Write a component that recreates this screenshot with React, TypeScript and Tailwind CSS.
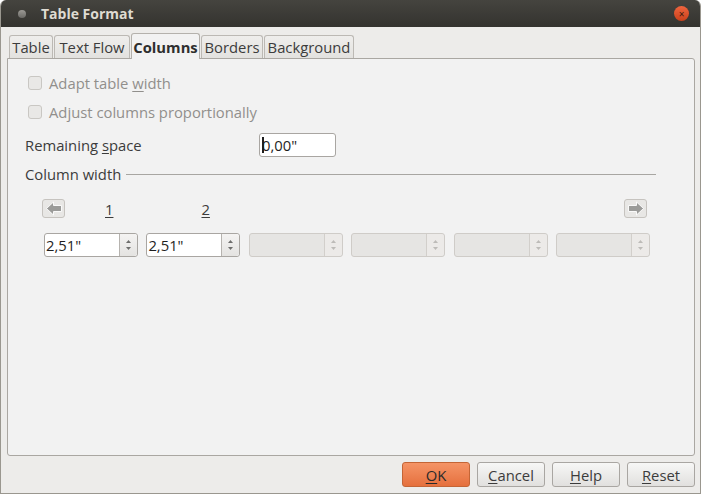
import React from 'react';

const font = { fontFamily: '"Open Sans", "Noto Sans", sans-serif' };

function Tab({ label, active, width }: { label: string; active?: boolean; width: number }) {
  return (
    <div
      className={`flex items-center justify-center rounded-t-[3px] border border-b-0 ${
        active
          ? 'h-[26px] border-[#b4b1ac] bg-[#f2f2f2] font-bold text-[#2e2e2e] -mb-px z-10'
          : 'h-[23px] border-[#bcb9b4] bg-gradient-to-b from-[#efeeec] to-[#e3e2df] text-[#3c3c3c]'
      }`}
      style={{ width }}
    >
      {label}
    </div>
  );
}

function Checkbox({ children }: { children: React.ReactNode }) {
  return (
    <div className="flex h-[20px] items-center gap-[7px] text-[#918f8c]">
      <div className="h-[14px] w-[14px] rounded-[3px] border border-[#c9c7c3] bg-[#e9e8e6]" />
      <span>{children}</span>
    </div>
  );
}

function ArrowButton({ dir }: { dir: 'left' | 'right' }) {
  return (
    <div className="flex h-[19px] w-[23px] items-center justify-center rounded-[3px] border border-[#c6c3bf] bg-[#e8e7e5]">
      <svg width="18" height="15" viewBox="0 0 18 15" className={dir === 'right' ? '' : '-scale-x-100'}>
        <path d="M1.5 4.5h8V1l7 6.5-7 6.5V10.5h-8z" fill="#9b9b99" stroke="#ffffff" strokeWidth="0.9" />
      </svg>
    </div>
  );
}

function Spin({ value, disabled }: { value?: string; disabled?: boolean }) {
  const c = disabled ? '#bdbbb8' : '#6e6e6c';
  return (
    <div
      className={`flex h-[24px] w-[94px] rounded-[3px] border ${
        disabled ? 'border-[#cfccc8] bg-[#e6e5e3]' : 'border-[#a9a6a2] bg-white'
      }`}
    >
      <div className="flex flex-1 items-center pl-px text-[#1e1e1e]">{value}</div>
      <div
        className={`flex w-[18px] flex-col items-center justify-center gap-[4px] rounded-r-[3px] border-l ${
          disabled ? 'border-[#d2cfcb] bg-[#eceae8]' : 'border-[#b6b3af] bg-gradient-to-b from-[#f4f3f2] to-[#e4e3e1]'
        }`}
      >
        <svg width="5" height="3" viewBox="0 0 5 3">
          <path d="M0 3L2.5 0L5 3z" fill={c} />
        </svg>
        <svg width="5" height="3" viewBox="0 0 5 3">
          <path d="M0 0L2.5 3L5 0z" fill={c} />
        </svg>
      </div>
    </div>
  );
}

function DlgButton({ label, primary }: { label: string; primary?: boolean }) {
  return (
    <div
      className={`flex h-[25px] w-[68px] items-center justify-center rounded-[3px] border ${
        primary
          ? 'border-[#c46536] bg-gradient-to-b from-[#f59466] to-[#e5703d] text-[#2a2a2a]'
          : 'border-[#a9a6a2] bg-gradient-to-b from-[#f7f7f6] to-[#e1e0de] text-[#3c3c3c]'
      }`}
    >
      <span>
        <span className="underline underline-offset-2">{label.slice(0, 1)}</span>
        {label.slice(1)}
      </span>
    </div>
  );
}

export default function App() {
  return (
    <div
      className="flex h-[494px] w-[701px] flex-col overflow-hidden rounded-t-[6px] border border-t-0 border-[#9a978f] bg-[#edecea] text-[14.8px] leading-[20px]"
      style={font}
    >
      {/* Title bar */}
      <div className="flex h-[27px] items-center bg-gradient-to-b from-[#45443f] to-[#34332f] pl-[15px] pr-[11px]">
        <div className="flex h-[12px] w-[12px] items-center justify-center">
          <div className="h-[8px] w-[8px] rounded-full bg-gradient-to-b from-[#9c9a95] to-[#6b6a66]" />
        </div>
        <div className="ml-[13px] text-[14px] font-bold text-[#dfdbd2]">Table Format</div>
        <div className="ml-auto flex h-[15px] w-[15px] items-center justify-center rounded-full bg-gradient-to-b from-[#f0653e] to-[#c9401a] text-[10px] leading-none text-[#3a1b0e]">
          ×
        </div>
      </div>

      <div className="flex flex-1 flex-col pl-[6px] pr-[5px] pt-[6px]">
        {/* Tabs */}
        <div className="flex items-end gap-[1px] pl-[2px]">
          <Tab label="Table" width={44} />
          <Tab label="Text Flow" width={76} />
          <Tab label="Columns" active width={69} />
          <Tab label="Borders" width={62} />
          <Tab label="Background" width={90} />
        </div>

        {/* Panel */}
        <div className="flex h-[398px] flex-col rounded-b-[3px] rounded-tr-[3px] border border-[#aaa7a2] bg-[#f2f2f2] pl-[17px] pr-[38px] pt-[14px]">
          <div className="pl-[3px]">
            <Checkbox>
              Adapt table <span className="underline underline-offset-2">w</span>idth
            </Checkbox>
          </div>
          <div className="mt-[9px] pl-[3px]">
            <Checkbox>Adjust columns proportionally</Checkbox>
          </div>

          <div className="mt-[11px] flex h-[24px] items-center text-[#3c3c3c]">
            <span className="w-[234px]">
              Remaining <span className="underline underline-offset-2">s</span>pace
            </span>
            <div className="flex h-[24px] w-[77px] items-center rounded-[3px] border border-[#a9a6a2] bg-white pl-[2px] text-[#1e1e1e]">
              <span className="mr-[-2px] h-[16px] w-[2px] bg-[#1e1e1e]" />
              0,00"
            </div>
          </div>

          <div className="mt-[7px] flex h-[20px] items-center text-[#3c3c3c]">
            <span>Column width</span>
            <div className="ml-[5px] h-px flex-1 bg-[#a8a6a2]" />
          </div>

          <div className="mt-[15px] flex h-[19px] items-center pl-[17px] pr-[9px] text-[#3c3c3c]">
            <ArrowButton dir="left" />
            <span className="ml-[40px] underline underline-offset-2">1</span>
            <span className="ml-[88px] underline underline-offset-2">2</span>
            <div className="ml-auto">
              <ArrowButton dir="right" />
            </div>
          </div>

          <div className="mt-[15px] flex gap-[8.4px] pl-[19px]">
            <Spin value={'2,51"'} />
            <Spin value={'2,51"'} />
            <Spin disabled />
            <Spin disabled />
            <Spin disabled />
            <Spin disabled />
          </div>
        </div>

        {/* Buttons */}
        <div className="mt-[6px] flex justify-end gap-[7px]">
          <DlgButton label="OK" primary />
          <DlgButton label="Cancel" />
          <DlgButton label="Help" />
          <DlgButton label="Reset" />
        </div>
      </div>
    </div>
  );
}
